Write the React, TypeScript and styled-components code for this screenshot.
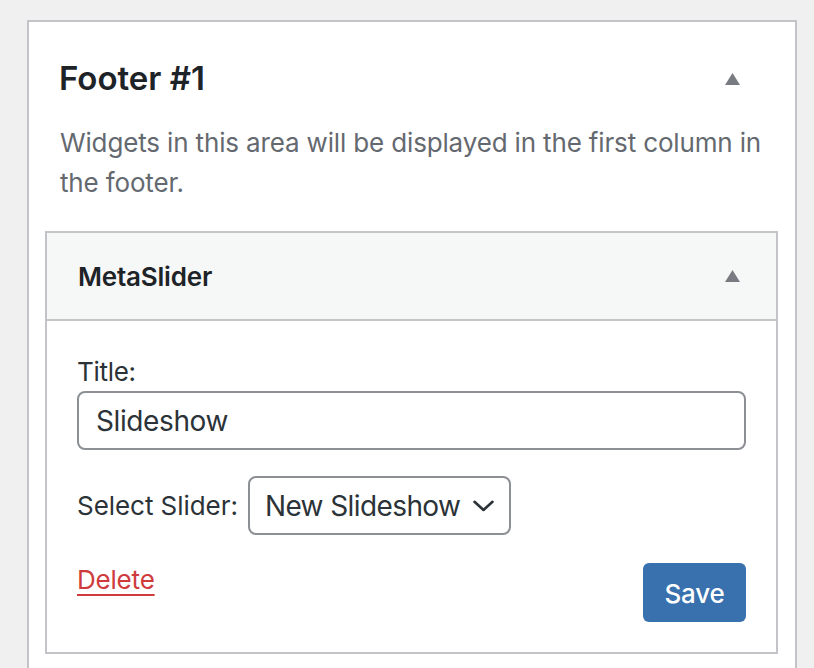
import React from 'react';
import styled, { createGlobalStyle } from 'styled-components';

const GlobalStyle = createGlobalStyle`
  html, body {
    margin: 0;
    padding: 0;
    background: #f0f0f1;
    overflow: hidden;
  }
  body {
    font-family: Inter, "Noto Sans", "Liberation Sans", sans-serif;
    color: #1d2327;
  }
`;

const Page = styled.div`
  padding: 20px 17px 0 27px;
  height: 668px;
  box-sizing: border-box;
`;

const Area = styled.section`
  background: #fff;
  border: 2px solid #c3c4c7;
  border-bottom: none;
  min-height: 700px;
  padding: 34px 17px 0 16px;
  box-sizing: border-box;
`;

const AreaHeader = styled.div`
  display: flex;
  align-items: center;
  justify-content: space-between;
  padding: 0 38px 0 14px;
`;

const AreaTitle = styled.h2`
  margin: 0;
  font-size: 33px;
  font-weight: 600;
  line-height: 45px;
  color: #1d2327;
  letter-spacing: 0;
`;

const Description = styled.p`
  margin: 22px 0 28px;
  padding: 0 15px;
  font-size: 26px;
  line-height: 40px;
  color: #646970;
  letter-spacing: -0.15px;
`;

const Widget = styled.div`
  border: 2px solid #c3c4c7;
  background: #fff;
`;

const WidgetHeader = styled.div`
  display: flex;
  align-items: center;
  justify-content: space-between;
  height: 86px;
  padding: 0 36px 0 31px;
  background: #f6f7f7;
  border-bottom: 2px solid #c3c4c7;
`;

const WidgetTitle = styled.h3`
  margin: 0;
  font-size: 26px;
  font-weight: 600;
  color: #1d2327;
  letter-spacing: -0.2px;
`;

const WidgetBody = styled.div`
  padding: 31px 30px 30px 30px;
`;

const Label = styled.label`
  display: block;
  font-size: 26px;
  line-height: 39px;
  color: #2c3338;
  letter-spacing: -0.3px;
`;

const TextInput = styled.input`
  display: block;
  width: 100%;
  box-sizing: border-box;
  height: 59px;
  margin: 0;
  padding: 0 17px;
  border: 2px solid #8c8f94;
  border-radius: 8px;
  font-family: inherit;
  font-size: 28px;
  color: #2c3338;
  letter-spacing: -0.4px;
  outline: none;
`;

const SelectRow = styled.div`
  display: flex;
  align-items: center;
  gap: 10px;
  margin-top: 26px;
`;

const InlineLabel = styled(Label)`
  display: inline;
  letter-spacing: -0.05px;
`;

const SelectBox = styled.div`
  display: flex;
  align-items: center;
  gap: 13px;
  height: 59px;
  box-sizing: border-box;
  padding: 0 15px 0 15px;
  border: 2px solid #8c8f94;
  border-radius: 8px;
  font-size: 28px;
  color: #2c3338;
  letter-spacing: -0.6px;
`;

const Actions = styled.div`
  display: flex;
  align-items: flex-start;
  justify-content: space-between;
  margin-top: 28px;
`;

const DeleteLink = styled.a`
  margin-top: 2px;
  font-size: 26px;
  line-height: 30px;
  color: #cf3b3d;
  text-decoration: underline;
  text-decoration-thickness: 2px;
  text-underline-offset: 5px;
  letter-spacing: -0.2px;
  cursor: pointer;
`;

const SaveButton = styled.button`
  width: 103px;
  height: 59px;
  padding: 2px 0 0;
  border: none;
  border-radius: 6px;
  background: #3871ad;
  color: #fff;
  font-family: inherit;
  font-size: 26px;
  font-weight: 500;
  letter-spacing: -0.2px;
  cursor: pointer;
`;

const Caret = () => (
  <svg width="15" height="12" viewBox="0 0 15 12" aria-hidden="true">
    <polygon points="7.5,0 15,12 0,12" fill="#787c82" />
  </svg>
);

const Chevron = () => (
  <svg width="21" height="12" viewBox="0 0 21 12" aria-hidden="true">
    <polyline
      points="1.5,1.8 10.5,10 19.5,1.8"
      fill="none"
      stroke="#2c3338"
      strokeWidth="2.6"
      strokeLinecap="round"
      strokeLinejoin="round"
    />
  </svg>
);

export default function App() {
  return (
    <>
      <GlobalStyle />
      <Page>
        <Area>
          <AreaHeader>
            <AreaTitle>Footer #1</AreaTitle>
            <Caret />
          </AreaHeader>
          <Description>
            Widgets in this area will be displayed in the first column in the footer.
          </Description>
          <Widget>
            <WidgetHeader>
              <WidgetTitle>MetaSlider</WidgetTitle>
              <Caret />
            </WidgetHeader>
            <WidgetBody>
              <Label htmlFor="widget-title">Title:</Label>
              <TextInput id="widget-title" type="text" defaultValue="Slideshow" />
              <SelectRow>
                <InlineLabel>Select Slider:</InlineLabel>
                <SelectBox>
                  <span>New Slideshow</span>
                  <Chevron />
                </SelectBox>
              </SelectRow>
              <Actions>
                <DeleteLink>Delete</DeleteLink>
                <SaveButton>Save</SaveButton>
              </Actions>
            </WidgetBody>
          </Widget>
        </Area>
      </Page>
    </>
  );
}
